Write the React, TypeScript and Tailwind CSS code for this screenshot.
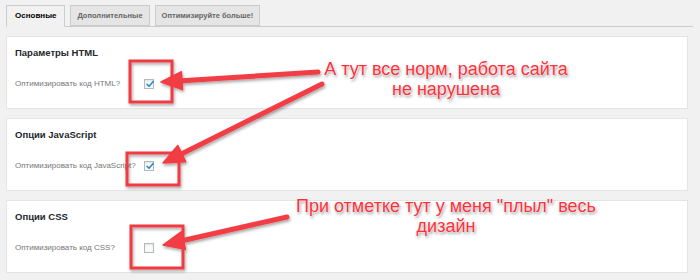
import React from 'react';

const sections = [
  { title: 'Параметры HTML', label: 'Оптимизировать код HTML?', checked: true },
  { title: 'Опции JavaScript', label: 'Оптимизировать код JavaScript?', checked: true },
  { title: 'Опции CSS', label: 'Оптимизировать код CSS?', checked: false },
];

const tabs = ['Основные', 'Дополнительные', 'Оптимизируйте больше!'];

const Checkbox: React.FC<{ checked: boolean }> = ({ checked }) => (
  <span className="relative flex h-[10px] w-[10px] shrink-0 items-center justify-center border border-[#b4b9be] bg-[#fbfbfb] shadow-[inset_0_1px_2px_rgba(0,0,0,0.1)]">
    {checked && (
      <svg className="absolute -top-[1px] left-[0px] h-[10px] w-[10px]" viewBox="0 0 10 10" fill="none">
        <path d="M2 5.2 L4 7.3 L8.2 2.4" stroke="#1e8cbe" strokeWidth={1.5} strokeLinecap="round" strokeLinejoin="round" />
      </svg>
    )}
  </span>
);

const Arrow: React.FC<{ x1: number; y1: number; x2: number; y2: number }> = ({ x1, y1, x2, y2 }) => {
  const ang = Math.atan2(y2 - y1, x2 - x1);
  const len = 21;
  const half = 9;
  const bx = x2 - Math.cos(ang) * len;
  const by = y2 - Math.sin(ang) * len;
  const px = -Math.sin(ang) * half;
  const py = Math.cos(ang) * half;
  const ex = x2 - Math.cos(ang) * (len - 4);
  const ey = y2 - Math.sin(ang) * (len - 4);
  return (
    <g>
      <line x1={x1} y1={y1} x2={ex} y2={ey} stroke="#f33c44" strokeWidth={5} strokeLinecap="round" />
      <polygon points={`${x2},${y2} ${bx + px},${by + py} ${bx - px},${by - py}`} fill="#f33c44" stroke="#f33c44" strokeWidth={1.5} strokeLinejoin="round" />
    </g>
  );
};

export default function App() {
  return (
    <div className="relative h-[280px] w-[700px] overflow-hidden bg-[#f1f1f1] pl-[6px] font-['Liberation_Sans',Arial,sans-serif] text-[#23282d]">
      {/* tabs */}
      <div className="mr-[7px] flex gap-[5px] border-b border-[#ccc] pt-[5px]">
        {tabs.map((t, i) => (
          <div
            key={t}
            className={
              i === 0
                ? '-mb-[1px] flex h-[22px] items-center border border-b-[#f1f1f1] border-[#ccc] bg-[#f1f1f1] px-[8px] text-[8px] font-bold text-[#000]'
                : 'flex h-[21px] items-center border border-[#ccc] bg-[#e5e5e5] px-[6px] text-[7.5px] font-bold text-[#666]'
            }
          >
            {t}
          </div>
        ))}
      </div>

      {/* panels */}
      <div className="mr-[12px] mt-[9px] flex flex-col gap-[9px]">
        {sections.map((s) => (
          <div key={s.title} className="flex h-[73px] flex-col border border-[#e2e4e7] bg-white pl-[8px] pt-[9px]">
            <div className="text-[9.5px] font-bold leading-[14px] text-[#23282d]">{s.title}</div>
            <div className="mt-[18px] flex items-center">
              <span className="w-[129px] shrink-0 whitespace-nowrap text-[8px] leading-[12px] text-[#777]">{s.label}</span>
              <Checkbox checked={s.checked} />
            </div>
          </div>
        ))}
      </div>

      {/* annotation overlay */}
      <svg className="pointer-events-none absolute left-0 top-0 h-[280px] w-[700px]" viewBox="0 0 700 280">
        <defs>
          <filter id="sh" x="-20%" y="-20%" width="140%" height="140%">
            <feDropShadow dx="1" dy="2" stdDeviation="1.5" floodColor="#000" floodOpacity="0.35" />
          </filter>
        </defs>
        <g filter="url(#sh)">
          <rect x={130} y={61} width={42} height={41} fill="none" stroke="#f03a42" strokeWidth={3} />
          <rect x={127} y={153} width={52} height={32} fill="none" stroke="#f03a42" strokeWidth={3} />
          <rect x={131} y={226} width={52} height={42} fill="none" stroke="#f03a42" strokeWidth={3} />
          <Arrow x1={318} y1={72} x2={161} y2={82} />
          <Arrow x1={322} y1={84} x2={163} y2={163} />
          <Arrow x1={287} y1={217} x2={163} y2={245} />
        </g>
      </svg>

      <div className="absolute left-[286px] top-[59px] w-[320px] whitespace-nowrap text-center text-[18px] leading-[20px] text-[#ff2f38] [text-shadow:0_0_1px_#fff,0_0_2px_#fff,1px_2px_3px_rgba(0,0,0,0.45)]">
        А тут все норм, работа сайта
        <br />
        не нарушена
      </div>
      <div className="absolute left-[286px] top-[196px] w-[320px] whitespace-nowrap text-center text-[18px] leading-[20px] text-[#ff2f38] [text-shadow:0_0_1px_#fff,0_0_2px_#fff,1px_2px_3px_rgba(0,0,0,0.45)]">
        При отметке тут у меня "плыл" весь
        <br />
        дизайн
      </div>
    </div>
  );
}
